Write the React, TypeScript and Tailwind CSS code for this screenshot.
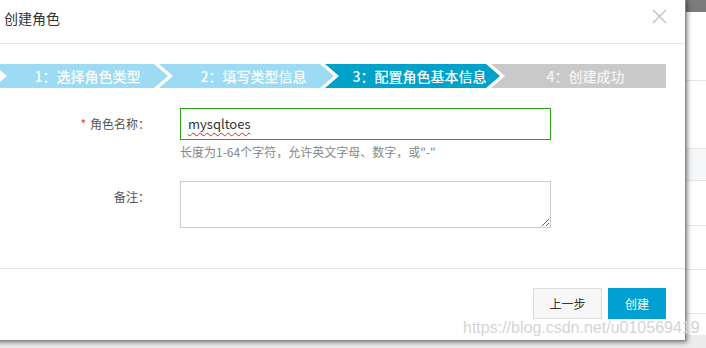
import React from "react";

const CJK = { fontFamily: '"Noto Sans CJK SC", "Noto Sans", sans-serif' } as const;

export default function App() {
  return (
    <div
      className="relative w-[706px] h-[348px] overflow-hidden bg-[#ececec]"
      style={CJK}
    >
      {/* page behind the dialog */}
      <div className="flex flex-col w-full">
        <div className="h-[12px] bg-[#7b7b7b]" />
        <div className="h-[69px] bg-white border-b border-[#e6e6e6]" />
        <div className="h-[68px] bg-white border-b border-[#e6e6e6]" />
        <div className="h-[32px] bg-[#f6f7f9] border-b border-[#e6e6e6]" />
        <div className="h-[45px] bg-white border-b border-[#e6e6e6]" />
        <div className="h-[44px] bg-white border-b border-[#e6e6e6]" />
        <div className="h-[44px] bg-white border-b border-[#e6e6e6]" />
        <div className="h-[21px] bg-white" />
      </div>

      {/* dialog */}
      <div className="absolute left-[-16px] top-0 w-[702px] h-[341px] bg-white flex flex-col shadow-[1px_1px_5px_rgba(0,0,0,0.55)] border-r border-b border-[#8a8a8a]">
        {/* header */}
        <div className="h-[44px] border-b border-[#e5e5e5] flex items-start justify-between pl-[20px] pr-[18px]">
          <div className="pt-[8px] text-[14px] leading-[20px] text-[#333]">创建角色</div>
          <svg width="15" height="15" viewBox="0 0 15 15" className="mt-[9px]">
            <path d="M1 1 L14 14 M14 1 L1 14" stroke="#c0c0c0" strokeWidth="1.4" fill="none" />
          </svg>
        </div>

        {/* body */}
        <div className="h-[225px] pt-[20px] border-b border-[#e5e5e5]">
          <div className="flex ml-[9px] w-[673px] h-[24px]">
            <div className="w-[175px] h-[24px] shrink-0 bg-[#9cdbf3] pl-[14px] text-center text-white text-[14px] font-medium leading-[24px] [clip-path:polygon(0_0,calc(100%_-_14px)_0,100%_50%,calc(100%_-_14px)_100%,0_100%,14px_50%)]">
              1：选择角色类型
            </div>
            <div className="w-[175px] h-[24px] shrink-0 -ml-[9px] bg-[#9cdbf3] pl-[14px] text-center text-white text-[14px] font-medium leading-[24px] [clip-path:polygon(0_0,calc(100%_-_14px)_0,100%_50%,calc(100%_-_14px)_100%,0_100%,14px_50%)]">
              2：填写类型信息
            </div>
            <div className="w-[175px] h-[24px] shrink-0 -ml-[9px] bg-[#00a2ca] pl-[14px] text-center text-white text-[14px] font-medium leading-[24px] [clip-path:polygon(0_0,calc(100%_-_14px)_0,100%_50%,calc(100%_-_14px)_100%,0_100%,14px_50%)]">
              3：配置角色基本信息
            </div>
            <div className="w-[175px] h-[24px] shrink-0 -ml-[9px] bg-[#c9c9c9] pl-[14px] text-center text-[#f4f4f4] text-[14px] font-medium leading-[24px] [clip-path:polygon(0_0,100%_0,100%_100%,0_100%,14px_50%)]">
              4：创建成功
            </div>
          </div>

          {/* row 1 */}
          <div className="flex mt-[20px]">
            <div className="w-[166px] h-[32px] text-right text-[12px] leading-[32px] text-[#555]">
              <span className="text-[#e4393c] mr-[4px]">*</span>角色名称：
            </div>
            <div className="ml-[30px] flex flex-col">
              <div className="w-[371px] h-[32px] border border-[#2aa515] flex items-center pl-[7px]">
                <span className="text-[13px] text-[#333] underline decoration-wavy decoration-[#e02020] decoration-1 underline-offset-[3px]">
                  mysqltoes
                </span>
              </div>
              <div className="mt-[3px] text-[12px] leading-[18px] text-[#888]">
                长度为1-64个字符，允许英文字母、数字，或"-"
              </div>
            </div>
          </div>

          {/* row 2 */}
          <div className="flex mt-[20px]">
            <div className="w-[166px] h-[32px] text-right text-[12px] leading-[32px] text-[#555]">
              备注：
            </div>
            <textarea
              className="ml-[30px] w-[371px] h-[47px] border border-[#cccccc] outline-none"
              defaultValue=""
            />
          </div>
        </div>

        {/* footer */}
        <div className="flex justify-end gap-[6px] pt-[19px] pr-[19px]">
          <div className="w-[69px] h-[31px] border border-[#dcdcdc] bg-[#f7f7f7] text-[12px] text-[#333] flex items-center justify-center">
            上一步
          </div>
          <div className="w-[58px] h-[31px] bg-[#00a0d2] text-[12px] text-white flex items-center justify-center">
            创建
          </div>
        </div>
      </div>

      {/* watermark */}
      <div
        className="absolute left-[463px] top-[318px] text-[16px] leading-[20px] text-[#d4d4d4]"
        style={{ fontFamily: '"Liberation Sans", Arial, sans-serif' }}
      >
        https://blog.csdn.net/u010569419
      </div>
    </div>
  );
}
